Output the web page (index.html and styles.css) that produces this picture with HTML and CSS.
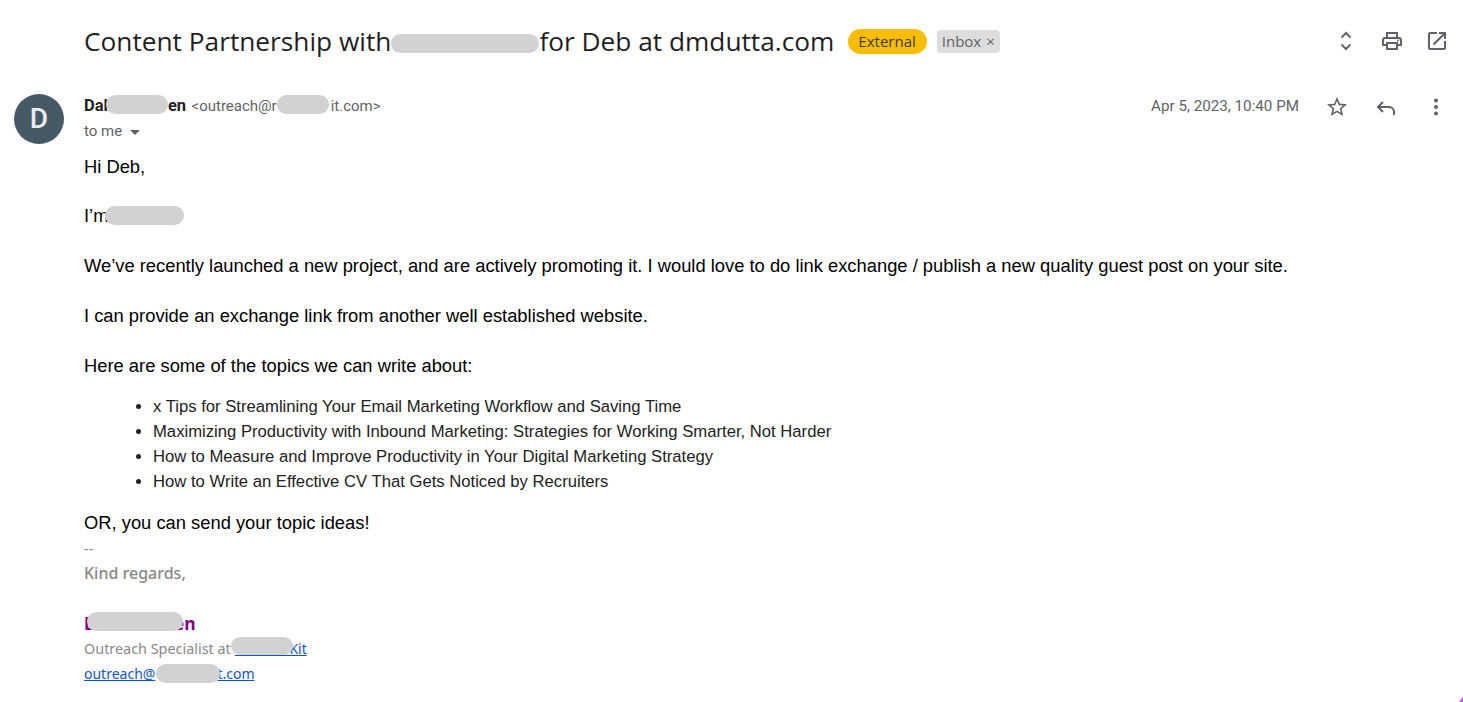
FILE: index.html
```html
<!DOCTYPE html>
<html lang="en">
<head>
    <meta charset="UTF-8">
    <meta name="viewport" content="width=device-width, initial-scale=1.0">
    <title>Content Partnership</title>
    <link rel="stylesheet" href="styles.css">
</head>
<body>
    <div class="subject-row">
        <h1 class="subject">Content Partnership with<span class="blob blob-subject"></span>for Deb at dmdutta.com</h1>
        <span class="tag-external">External</span>
        <span class="tag-inbox">Inbox <span class="tag-x">×</span></span>
        <div class="subject-icons">
            <svg class="icon" viewBox="0 0 24 24"><path d="M7.400 8.600 12 4l4.600 4.600M7.400 15.400 12 20l4.600-4.600" fill="none" stroke="#5f6368" stroke-width="2"/></svg>
            <svg class="icon" viewBox="0 0 24 24"><path d="M19 8h-1V3H6v5H5a3 3 0 0 0-3 3v6h4v4h12v-4h4v-6a3 3 0 0 0-3-3zM8 5h8v3H8V5zm8 14H8v-4h8v4zm2-4v-2H6v2H4v-4a1 1 0 0 1 1-1h14a1 1 0 0 1 1 1v4h-2z" fill="#5f6368"/><circle cx="18" cy="11.500" r="1" fill="#5f6368"/></svg>
            <svg class="icon" viewBox="0 0 24 24"><path d="M19 19H5V5h7V3H5a2 2 0 0 0-2 2v14a2 2 0 0 0 2 2h14a2 2 0 0 0 2-2v-7h-2v7zM14 3v2h3.600l-9.800 9.800 1.400 1.400L19 6.400V10h2V3h-7z" fill="#5f6368"/></svg>
        </div>
    </div>

    <div class="message">
        <div class="avatar">D</div>
        <div class="message-main">
            <div class="message-head">
                <div class="sender">
                    <div class="sender-line">
                        <span class="sender-name">Dal<span class="blob blob-name"></span>en</span>
                        <span class="sender-mail">&lt;outreach@r<span class="blob blob-mail"></span>it.com&gt;</span>
                    </div>
                    <div class="to-line">to me <span class="caret"></span></div>
                </div>
                <div class="message-meta">
                    <span class="date">Apr 5, 2023, 10:40 PM</span>
                    <svg class="icon icon-star" viewBox="0 0 24 24"><path d="M22 9.240l-7.190-.620L12 2 9.190 8.630 2 9.240l5.460 4.730L5.820 21 12 17.270 18.180 21l-1.630-7.030L22 9.240zM12 15.400l-3.760 2.270 1-4.280-3.320-2.880 4.380-.380L12 6.100l1.710 4.040 4.380.380-3.320 2.880 1 4.280L12 15.400z" fill="#5f6368"/></svg>
                    <svg class="icon" viewBox="0 0 24 24"><path d="M9 7 4 12l5 5M4.500 12H15a5 5 0 0 1 5 5v3" fill="none" stroke="#5f6368" stroke-width="2"/></svg>
                    <svg class="icon" viewBox="0 0 24 24"><circle cx="12" cy="5.500" r="2" fill="#5f6368"/><circle cx="12" cy="12" r="2" fill="#5f6368"/><circle cx="12" cy="18.500" r="2" fill="#5f6368"/></svg>
                </div>
            </div>

            <div class="body-text">
                <p class="greeting">Hi Deb,</p>
                <p>I’m<span class="blob blob-me"></span></p>
                <p>We’ve recently launched a new project, and are actively promoting it. I would love to do link exchange / publish a new quality guest post on your site.</p>
                <p>I can provide an exchange link from another well established website.</p>
                <p class="topics-intro">Here are some of the topics we can write about:</p>
                <ul class="topics">
                    <li>x Tips for Streamlining Your Email Marketing Workflow and Saving Time</li>
                    <li>Maximizing Productivity with Inbound Marketing: Strategies for Working Smarter, Not Harder</li>
                    <li>How to Measure and Improve Productivity in Your Digital Marketing Strategy</li>
                    <li>How to Write an Effective CV That Gets Noticed by Recruiters</li>
                </ul>
                <p class="closing">OR, you can send your topic ideas!</p>
            </div>

            <div class="signature">
                <div class="sig-dash">--</div>
                <div class="sig-regards">Kind regards,</div>
                <div class="sig-name">D<span class="blob blob-signame"></span>en</div>
                <div class="sig-line">Outreach Specialist at<span class="blob blob-sigorg"></span><a href="#">&nbsp;&nbsp;&nbsp;&nbsp;&nbsp;&nbsp;&nbsp;&nbsp;&nbsp;&nbsp;&nbsp;&nbsp;&nbsp;&nbsp;&nbsp;Kit</a></div>
                <div class="sig-line"><a href="#">outreach@</a><span class="blob blob-sigmail"></span><a href="#">t.com</a></div>
            </div>
        </div>
    </div>
    <div class="corner-mark"></div>
</body>
</html>
```

FILE: styles.css
```css
body {
    margin: 0;
    background: #fff;
    font-family: "Liberation Sans", Arial, sans-serif;
    overflow: hidden;
}
.blob {
    display: inline-block;
    position: relative;
    height: 19px;
    background: #d1d2d4;
    border-radius: 10px;
    vertical-align: -4px;
}
.icon {
    width: 24px;
    height: 24px;
    flex: none;
}
.subject-row {
    display: flex;
    align-items: center;
    height: 42px;
    padding: 20px 14px 0 84px;
}
.subject {
    margin: 0;
    font-family: "Open Sans", sans-serif;
    font-size: 26.250px;
    font-weight: 400;
    color: #1f1f1f;
    white-space: nowrap;
}
.blob-subject {
    width: 148px;
    vertical-align: -2px;
}
.tag-external {
    margin-left: 14px;
    padding: 0 11px 0 10px;
    height: 25px;
    line-height: 25px;
    border-radius: 13px;
    background: #fbbc04;
    color: #3c4043;
    font-family: "Open Sans", sans-serif;
    font-size: 15px;
}
.tag-inbox {
    margin-left: 10px;
    padding: 0 5px;
    height: 23px;
    line-height: 23px;
    border-radius: 4px;
    background: #dddddd;
    color: #5f6368;
    font-family: "Open Sans", sans-serif;
    font-size: 15px;
}
.tag-x {
    margin-left: 1px;
}
.subject-icons {
    display: flex;
    gap: 21.500px;
    margin-left: auto;
}
.message {
    display: flex;
    padding: 32px 0 0 14px;
}
.avatar {
    flex: none;
    width: 50px;
    height: 50px;
    border-radius: 50%;
    background: #455a64;
    color: #e8eaed;
    font-family: "Roboto", sans-serif;
    font-size: 28px;
    font-weight: 500;
    line-height: 50px;
    text-align: center;
}
.message-main {
    flex: 1;
    padding-left: 20px;
}
.message-head {
    display: flex;
    justify-content: space-between;
    height: 59px;
    padding-right: 15px;
}
.sender-line {
    height: 24px;
    line-height: 24px;
}
.sender-name {
    font-family: "Roboto", sans-serif;
    font-size: 16.500px;
    font-weight: 700;
    color: #1f1f1f;
}
.sender-mail {
    margin-left: 1px;
    font-family: "Roboto", sans-serif;
    font-size: 15px;
    color: #5f6368;
}
.blob-name {
    width: 62px;
    margin: 0 0 0 -2px;
    vertical-align: -3px;
}
.blob-mail {
    width: 52px;
    margin-right: 2px;
    vertical-align: -3px;
}
.to-line {
    margin-top: 1px;
    line-height: 25px;
    font-family: "Roboto", sans-serif;
    font-size: 15px;
    color: #5f6368;
}
.caret {
    display: inline-block;
    margin-left: 4px;
    border-left: 5px solid transparent;
    border-right: 5px solid transparent;
    border-top: 5px solid #5f6368;
    vertical-align: 1px;
}
.message-meta {
    display: flex;
    align-items: flex-start;
    gap: 26px;
    padding-top: 1px;
}
.icon-star {
    margin-right: -1px;
}
.date {
    font-family: "Roboto", sans-serif;
    font-size: 15.200px;
    line-height: 22px;
    color: #5f6368;
}
.body-text {
    font-size: 18.350px;
    line-height: 25px;
    color: #000;
}
.body-text p {
    margin: 0 0 25px;
}
.body-text .greeting {
    margin: 1px 0 24px;
}
.body-text .topics-intro {
    margin-bottom: 16px;
}
.body-text .closing {
    margin: 16px 0 0;
}
.blob-me {
    width: 79px;
    margin-left: -3px;
    vertical-align: -3px;
}
.topics {
    margin: 0;
    padding-left: 69px;
    font-size: 16.660px;
    color: #222;
}
.signature {
    padding-top: 1px;
    font-family: "Noto Sans", sans-serif;
    font-size: 14.400px;
    color: #888;
}
.sig-dash {
    line-height: 25px;
}
.sig-regards {
    font-size: 16px;
    font-weight: 500;
    line-height: 25px;
    height: 50px;
}
.sig-name {
    font-size: 17.500px;
    font-weight: 700;
    line-height: 25px;
    color: #800080;
}
.blob-signame {
    width: 96px;
    margin: 0 -9px 0 -10px;
    vertical-align: -1px;
}
.sig-line {
    line-height: 25px;
}
.sig-line a {
    color: #1155cc;
    font-size: 14px;
}
.blob-sigorg {
    width: 62px;
    height: 18px;
    margin-right: -58px;
    vertical-align: -1px;
}
.blob-sigmail {
    width: 64px;
    margin: 0 -3px 0 1px;
}
.corner-mark {
    position: fixed;
    right: 0;
    bottom: 0;
    width: 4px;
    height: 5px;
    background: #b94cf0;
    clip-path: polygon(100% 0, 100% 100%, 0 100%);
}
```
